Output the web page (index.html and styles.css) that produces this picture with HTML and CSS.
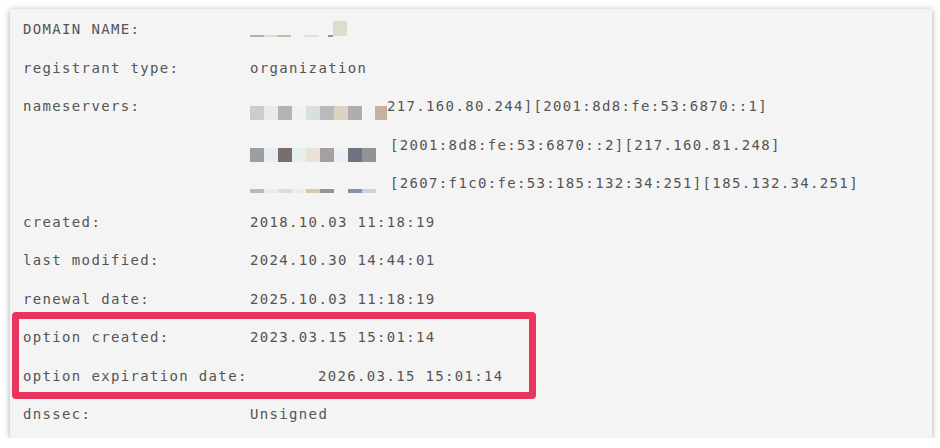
FILE: index.html
```html
<!DOCTYPE html>
<html lang="en">
<head>
    <meta charset="UTF-8">
    <title>Whois</title>
    <link rel="stylesheet" href="styles.css">
</head>
<body>
    <div class="panel">
        <div class="row">
            <div class="label">DOMAIN NAME:</div>
            <div class="value"><span class="mosaic m0"><i style="width:14px;background:#a9b1c1"></i><i style="width:13px;background:#e1dcd0"></i><i style="width:14px;background:#c7b8a7"></i><i style="width:13px;background:#f4f4f4"></i><i style="width:15px;background:#e0e0e0"></i><i style="width:9px;background:#f4f4f4"></i><i style="width:5px;background:#8a92a2"></i><i class="tall" style="width:14px;background:#dedccc"></i></span></div>
        </div>
        <div class="row">
            <div class="label">registrant type:</div>
            <div class="value">organization</div>
        </div>
        <div class="row">
            <div class="label">nameservers:</div>
            <div class="value">
                <div class="ns">
                    <span class="mosaic m1">
                        <i style="background:#cccccc"></i>
                        <i style="background:#ede9e5"></i>
                        <i style="background:#b3b3b5"></i>
                        <i style="background:#eef2f2"></i>
                        <i style="background:#d9dee0"></i>
                        <i style="background:#b8bac2"></i>
                        <i style="background:#ded3c0"></i>
                        <i style="background:#b0adae"></i>
                        <i style="width:13px;background:#f4f4f4"></i>
                        <i style="width:12px;background:#c4b2a0"></i>
                    </span>
                    <span>217.160.80.244][2001:8d8:fe:53:6870::1]</span>
                </div>
                <div class="ns">
                    <span class="mosaic m2">
                        <i style="background:#9b9fa1"></i>
                        <i style="background:#e9ecf0"></i>
                        <i style="background:#786e6a"></i>
                        <i style="background:#e5f0ee"></i>
                        <i style="background:#ebe1d8"></i>
                        <i style="background:#a5a09e"></i>
                        <i style="background:#eceff3"></i>
                        <i style="background:#6e7380"></i>
                        <i style="background:#8f9597"></i>
                    </span>
                    <span class="ns-text">[2001:8d8:fe:53:6870::2][217.160.81.248]</span>
                </div>
                <div class="ns">
                    <span class="mosaic m3">
                        <i style="background:#c4b8a9"></i>
                        <i style="background:#e8ecee"></i>
                        <i style="background:#dcdcdc"></i>
                        <i style="background:#e4f1f0"></i>
                        <i style="background:#d8c7b3"></i>
                        <i style="background:#9a9496"></i>
                        <i style="background:#f4f4f4"></i>
                        <i style="background:#8193b0"></i>
                        <i style="background:#c8d4d6"></i>
                    </span>
                    <span class="ns-text">[2607:f1c0:fe:53:185:132:34:251][185.132.34.251]</span>
                </div>
            </div>
        </div>
        <div class="row">
            <div class="label">created:</div>
            <div class="value">2018.10.03 11:18:19</div>
        </div>
        <div class="row">
            <div class="label">last modified:</div>
            <div class="value">2024.10.30 14:44:01</div>
        </div>
        <div class="row">
            <div class="label">renewal date:</div>
            <div class="value">2025.10.03 11:18:19</div>
        </div>
        <div class="row">
            <div class="label">option created:</div>
            <div class="value">2023.03.15 15:01:14</div>
        </div>
        <div class="row">
            <div class="label">option expiration date:</div>
            <div class="value shifted">2026.03.15 15:01:14</div>
        </div>
        <div class="row">
            <div class="label">dnssec:</div>
            <div class="value">Unsigned</div>
        </div>

        <div class="highlight"></div>
    </div>
</body>
</html>
```

FILE: styles.css
```css
body {
    margin: 0;
    padding: 9px 0 0 10px;
    background: #ffffff;
    font-family: "DejaVu Sans Mono", monospace;
}

.panel {
    position: relative;
    width: 922px;
    height: 429px;
    box-sizing: border-box;
    padding: 1px 0 0 13px;
    background: #f4f4f4;
    box-shadow: 0 1px 6px rgba(0, 0, 0, 0.35);
    color: #555555;
    font-size: 14px;
    letter-spacing: 1.34px;
    line-height: 38.5px;
}

.row {
    display: grid;
    grid-template-columns: 227px 1fr;
}

.label,
.value {
    white-space: nowrap;
}

.shifted {
    padding-left: 68px;
}

.ns {
    display: flex;
    height: 38.5px;
}

.ns-text {
    padding-left: 14px;
}

.mosaic {
    display: inline-flex;
    align-items: flex-start;
    height: 38.5px;
    vertical-align: top;
}

.mosaic i {
    display: block;
    width: 14px;
    flex-shrink: 0;
}

.m0 i {
    height: 2px;
    margin-top: 25px;
}

.m0 i.tall {
    height: 15px;
    margin-top: 11px;
}

.m1 i {
    height: 14px;
    margin-top: 19px;
}

.m2 i {
    height: 14px;
    margin-top: 22px;
}

.m3 i {
    height: 4px;
    margin-top: 25px;
}

.highlight {
    position: absolute;
    left: 2px;
    top: 303px;
    width: 510px;
    height: 73px;
    border: 7px solid #e8365e;
    border-radius: 4px;
}
```
